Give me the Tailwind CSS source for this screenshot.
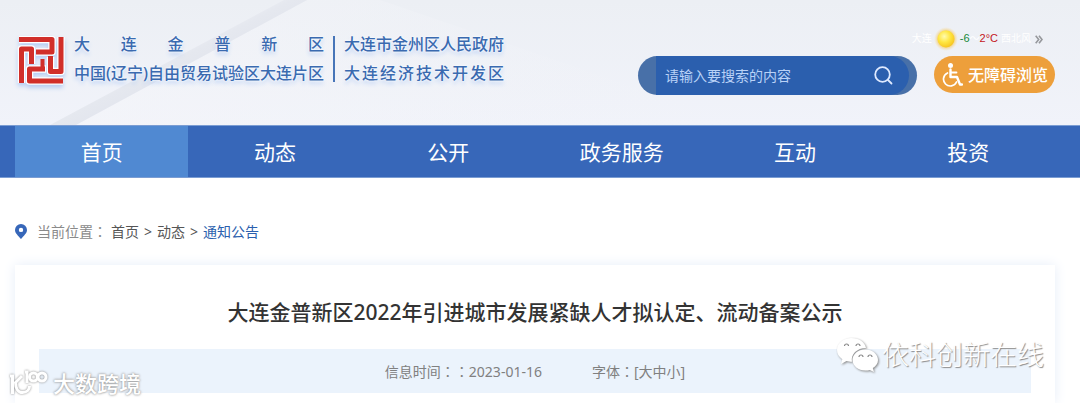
<!DOCTYPE html>
<html lang="zh-CN">
<head>
<meta charset="utf-8">
<meta name="viewport" content="width=device-width, initial-scale=1">
<title>大连金普新区 - 通知公告</title>
<script src="https://cdn.jsdelivr.net/npm/@tailwindcss/browser@4"></script>
</head>
<body class="relative flex min-h-screen flex-col overflow-x-hidden bg-white font-['Noto_Sans','Noto_Sans_CJK_SC',sans-serif] text-sm text-[#555] [text-spacing-trim:space-all]">

<header class="relative bg-linear-to-b from-[#eceff4] to-[#f1f3fa]">
  <svg class="absolute inset-0 h-full w-full" viewBox="0 0 1080 125" preserveAspectRatio="xMinYMin slice" aria-hidden="true">
    <defs>
      <linearGradient id="ray" gradientUnits="userSpaceOnUse" x1="168" y1="50" x2="180" y2="73">
        <stop offset="0" stop-color="#eceef4"/><stop offset=".5" stop-color="#e5e8ef"/><stop offset="1" stop-color="#e3e6ee"/>
      </linearGradient>
      <linearGradient id="sheet" x1="0" y1="0" x2="1" y2="0">
        <stop offset="0" stop-color="#f4f5f9"/><stop offset="1" stop-color="#f1f3f8" stop-opacity="0"/>
      </linearGradient>
    </defs>
    <path d="M307 0 380 0 745 125 76 125Z" fill="url(#sheet)" opacity=".7"/>
    <path d="M284 0H307L76 125H50Z" fill="url(#ray)"/>
  </svg>

  <div class="relative flex items-start justify-between pr-[25px] pb-[30px] pl-[17px]">
    <a href="#" class="mt-[34px] flex items-start text-base leading-[29px] font-medium text-[#3a6ab0] [text-shadow:0_0_2px_#fff,0_0_3px_#fff,0_3px_4px_#b5cdf4]">
      <svg class="mt-[2px] h-[50px] w-12 shrink-0 drop-shadow-[0_3px_2px_#b5cdf4]" viewBox="-2 -1 48 50" role="img" aria-label="大连金普新区">
        <g fill="none" stroke-linejoin="round">
          <g stroke="#fff" stroke-width="7.500">
            <path d="M0 2.500H33V15H17"/><path d="M42 0V34.500H31.500V20"/><path d="M2.500 46V12H12.500V27"/><path d="M44 44H10.500V32H27"/>
          </g>
          <g stroke="#d12f2a" stroke-width="5">
            <path d="M0 2.500H33V15H17"/><path d="M42 0V34.500H31.500V19"/><path d="M2.500 46V12H12.500V27"/><path d="M44 44H10.500V32H26"/>
            <path d="M23.500 32V22" stroke-width="4"/>
          </g>
        </g>
      </svg>
      <span class="-mt-1 ml-[9px] flex flex-col">
        <span class="flex justify-between"><span>大</span><span>连</span><span>金</span><span>普</span><span>新</span><span>区</span></span>
        <span class="whitespace-nowrap">中国(辽宁)自由贸易试验区大连片区</span>
      </span>
      <span class="mt-[2px] ml-[9px] h-[46px] w-[2px] bg-[#4775b8]"></span>
      <span class="-mt-1 ml-[9px] flex flex-col">
        <span>大连市金州区人民政府</span>
        <span class="flex justify-between"><span>大</span><span>连</span><span>经</span><span>济</span><span>技</span><span>术</span><span>开</span><span>发</span><span>区</span></span>
      </span>
    </a>

    <div class="mt-[27px] flex flex-col items-end">
      <div class="flex h-6 items-center pr-3 font-['Liberation_Sans','Noto_Sans_CJK_SC',sans-serif] text-[11px] text-white">
        <span class="text-[10px]">大连</span>
        <svg class="mx-[2px] h-6 w-6" viewBox="0 0 24 24" aria-hidden="true">
          <defs>
            <radialGradient id="sun" cx=".4" cy=".35" r=".7"><stop offset="0" stop-color="#fffbb0"/><stop offset=".5" stop-color="#ffe641"/><stop offset="1" stop-color="#f6c21c"/></radialGradient>
            <radialGradient id="glow"><stop offset=".6" stop-color="#f3c75f"/><stop offset="1" stop-color="#f7dda0" stop-opacity="0"/></radialGradient>
          </defs>
          <circle cx="12" cy="12" r="12" fill="url(#glow)"/><circle cx="12" cy="12" r="8.500" fill="url(#sun)"/>
        </svg>
        <span class="text-[#16893a]">-6</span><span class="text-[10px]">～</span><span class="text-[#c4161c]">2°C</span>
        <span class="ml-[3px] text-[10px]">西北风</span>
        <svg class="ml-1 h-[9px] w-2" viewBox="0 0 8 9" fill="none" stroke="#96989c" stroke-width="1.600" aria-hidden="true"><path d="M.7.7 3.700 4.500.7 8.300M4 .7 7 4.500 4 8.300"/></svg>
      </div>
      <div class="mt-[5px] flex items-start gap-[17px]">
        <form class="flex h-[39px] w-[279px] rounded-full bg-[#4870a8] pr-2 pl-[18px]" onsubmit="return false">
          <div class="flex flex-1 items-center rounded-r-full bg-[#2b5fae] pr-4 pl-[9px]">
            <input type="text" aria-label="搜索" placeholder="请输入要搜索的内容" class="h-8 w-0 flex-1 bg-transparent text-sm text-white outline-none placeholder:text-[#b9d2f7]">
            <button type="submit" aria-label="搜索" class="text-[#dfeaff]">
              <svg class="h-[19px] w-[19px]" viewBox="0 0 19 19" fill="none" stroke="currentColor" stroke-width="1.800" stroke-linecap="round"><circle cx="8.500" cy="8.500" r="7.300"/><path d="m14 14 3.500 3.500"/></svg>
            </button>
          </div>
        </form>
        <button type="button" class="flex h-[37px] w-[121px] items-center rounded-full bg-[#ed9f3b] pl-2 text-base font-medium text-white">
          <svg class="mr-[5px] h-6 w-[21px] shrink-0" viewBox="0 0 21 24" fill="none" stroke="#fff" stroke-linecap="round" stroke-linejoin="round" aria-hidden="true">
            <circle cx="8.500" cy="2.500" r="2.500" fill="#fff" stroke="none"/>
            <path d="M8.500 6.500V14H15L18 21.500H20" stroke-width="2.400"/><path d="M9 9.500H14.500" stroke-width="1.800"/>
            <path d="M5.500 10A6.800 6.800 0 1 0 14.500 19" stroke-width="1.700"/>
          </svg>
          <span class="whitespace-nowrap">无障碍浏览</span>
        </button>
      </div>
    </div>
  </div>
</header>

<nav class="relative border-y border-[#7b9dd3] bg-[#3767b9] pr-[25px] pl-[15px]">
  <ul class="grid grid-cols-6 text-center text-[21px] leading-[50px] text-white">
    <li class="bg-[#5089d2] pt-px"><a class="block" href="#">首页</a></li>
    <li class="pt-px"><a class="block" href="#">动态</a></li>
    <li class="pt-px"><a class="block" href="#">公开</a></li>
    <li class="pt-px"><a class="block" href="#">政务服务</a></li>
    <li class="pt-px"><a class="block" href="#">互动</a></li>
    <li class="pt-px"><a class="block" href="#">投资</a></li>
  </ul>
</nav>

<main class="flex flex-1 flex-col pr-[25px] pl-[15px]">
  <div class="flex items-center pt-[43px] pb-[23px] leading-5">
    <svg class="mr-[10px] h-[15px] w-3" viewBox="0 0 12 15" aria-hidden="true"><path fill="#3767b9" fill-rule="evenodd" d="M6 0a6 6 0 0 1 6 6c0 3.300-3.500 6-6 9C3.500 12 0 9.300 0 6a6 6 0 0 1 6-6Zm0 3.700a2.200 2.200 0 1 0 0 4.400 2.200 2.200 0 0 0 0-4.400Z"/></svg>
    <span class="text-[#8a8a8a]">当前位置<span lang="zh-TW" class="font-['Noto_Sans_CJK_TC',sans-serif]">：</span></span>
    <div class="ml-1 flex gap-[5px]">
      <a href="#">首页</a><span>&gt;</span><a href="#">动态</a><span>&gt;</span><a href="#" class="text-[#2b5fae]">通知公告</a>
    </div>
  </div>

  <article class="flex-1 bg-white px-6 shadow-[0_0_12px_#e6edf8]">
    <h1 class="pt-[31px] pb-[21px] text-center text-[21px] leading-8 font-medium text-[#333]">大连金普新区2022年引进城市发展紧缺人才拟认定、流动备案公示</h1>
    <div class="flex h-11 items-center justify-center gap-[50px] bg-[#ebf3fc] text-[#808080]">
      <span>信息时间<span lang="zh-TW" class="font-['Noto_Sans_CJK_TC',sans-serif]">：：</span>2023-01-16</span>
      <span>字体<span lang="zh-TW" class="font-['Noto_Sans_CJK_TC',sans-serif]">：</span>[<button type="button">大</button><button type="button">中</button><button type="button">小</button>]</span>
    </div>
  </article>
</main>

<div class="absolute top-[335px] right-9 flex items-center gap-[3px] text-[27px] leading-10 font-light text-white [text-shadow:1px_1px_1px_#888]">
  <svg class="h-9 w-[43px] drop-shadow-[1px_1px_1px_#888]" viewBox="0 0 43 36" aria-hidden="true">
    <path fill="#fff" d="M15.500 1C7.500 1 1 6.300 1 13c0 3.800 2 7 5.300 9.200L5 27l5.500-2.900c1.800.5 3.300.7 5.500.7-1.500-7.500 5-13.800 14-13.800C29 5 23 1 15.500 1Z"/>
    <path fill="#fff" d="M42 23c0-5.800-5.700-10.500-12.700-10.500S16.500 17.200 16.500 23s5.800 10.500 12.800 10.500c1.600 0 3-.2 4.500-.6L38 35l-1.200-3.900C40 29.200 42 26.300 42 23Z"/>
    <g fill="none" stroke="#888" stroke-width="1.200"><path d="M8.500 9a2 2 0 0 1 4 0M20 9a2 2 0 0 1 4 0M23 20a2 2 0 0 1 4 0M32 20a2 2 0 0 1 4 0"/></g>
  </svg>
  <span>依科创新在线</span>
</div>

<div class="absolute top-[367px] left-[9px] flex items-center gap-[5px] text-[22px] leading-8 font-medium text-white [text-shadow:0_0_2px_#999,0_0_3px_#aaa]">
  <svg class="h-7 w-[39px] drop-shadow-[0_0_1px_#888]" viewBox="0 0 39 28" fill="none" stroke="#fff" stroke-width="3" aria-hidden="true">
    <path d="M1 7H3.500V25M13 7 6.500 13.500C6.500 19 9 23.500 13.500 23.500S20.500 20.500 20.500 17"/>
    <path d="M16 3H18V14"/><circle cx="24.500" cy="8" r="4"/><circle cx="33" cy="8" r="4"/>
  </svg>
  <span>大数跨境</span>
</div>
</body>
</html>
